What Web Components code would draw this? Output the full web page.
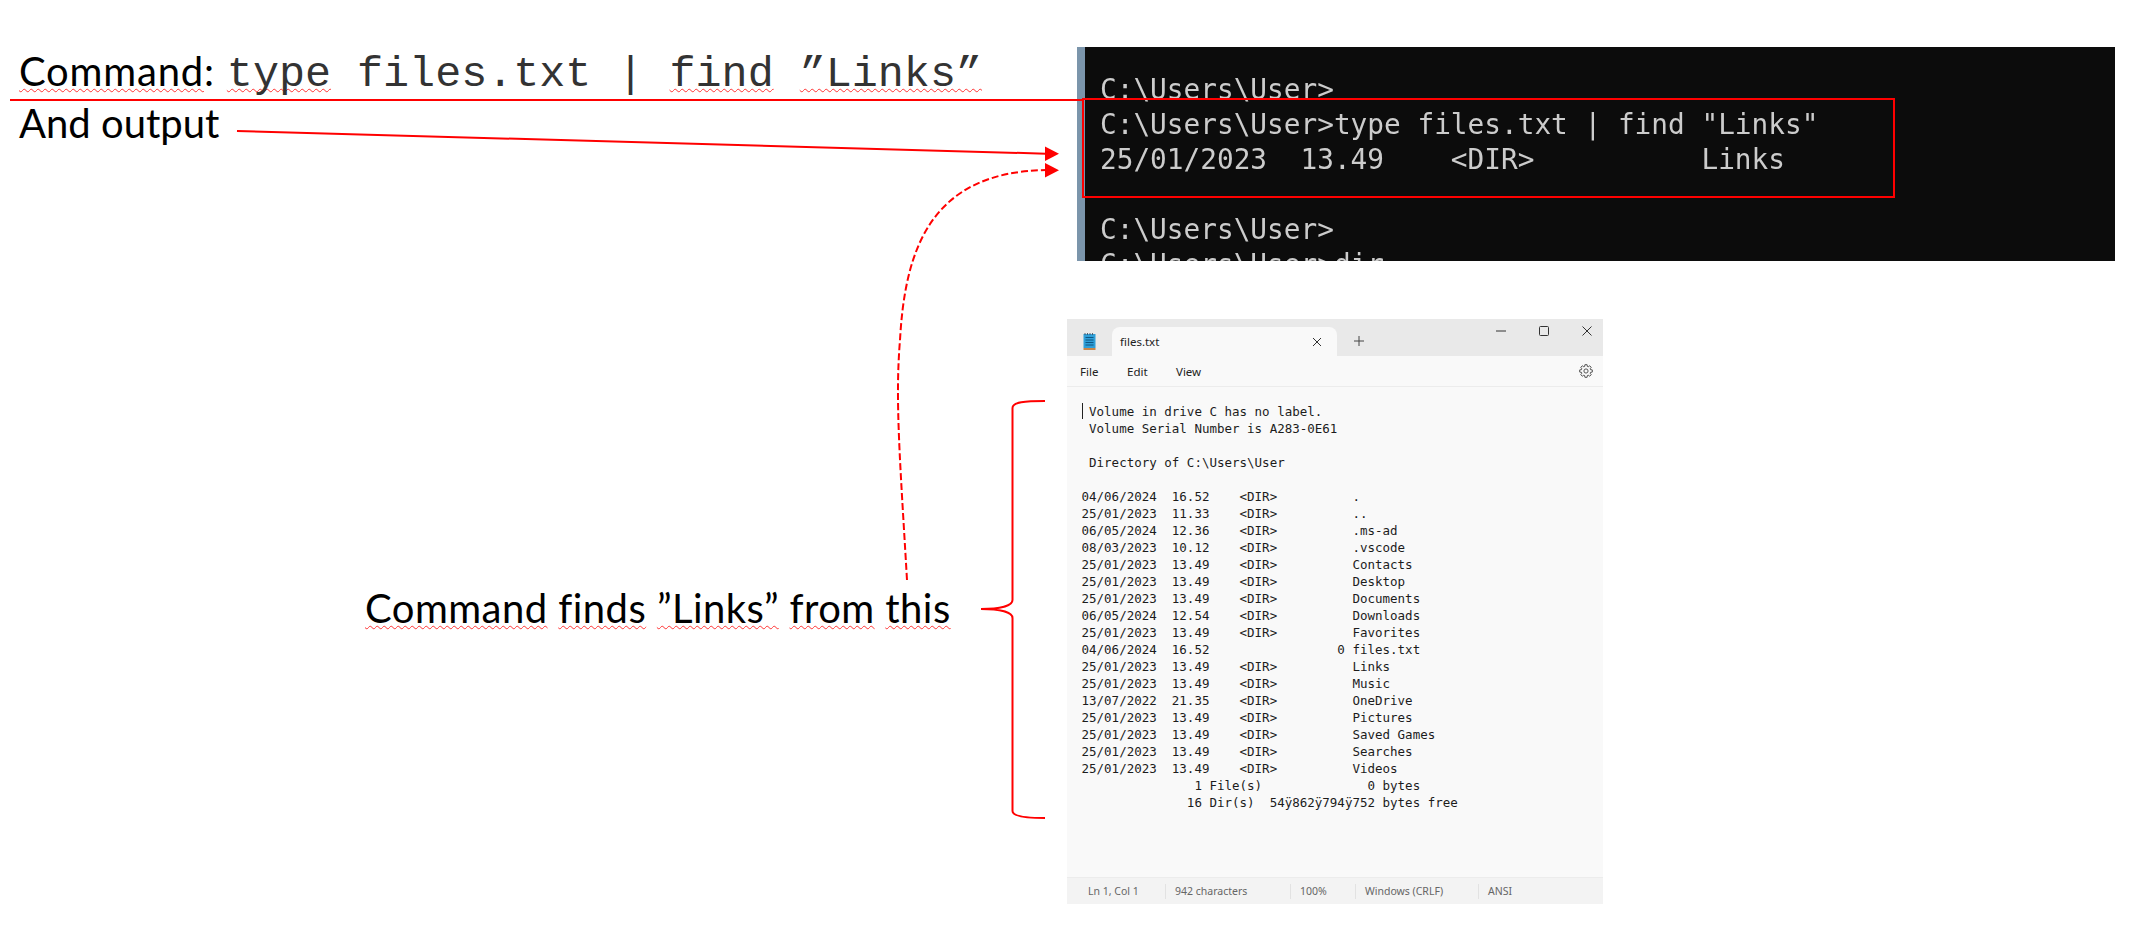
<!DOCTYPE html>
<html lang="en">
<head>
<meta charset="utf-8">
<title>files.txt</title>
<style>
    html, body { margin: 0; padding: 0; background: #fff; overflow: hidden; }
</style>
</head>
<body>
<slide-canvas>
    <slide-label style="--x: 19px; --y: 46px; --ls: 0.8px;"><spell-word>Command</spell-word>: <cmd-text><spell-word>type</spell-word> files.txt | <spell-word>find</spell-word> <spell-word>”Links”</spell-word></cmd-text></slide-label>
    <slide-label style="--x: 19px; --y: 98px;">And output</slide-label>
    <slide-label style="--x: 365px; --y: 583px; --ls: 0.45px;"><spell-word>Command</spell-word> <spell-word>finds</spell-word> <spell-word>”Links”</spell-word> <spell-word>from</spell-word> <spell-word>this</spell-word></slide-label>
    <terminal-shot></terminal-shot>
    <notepad-window></notepad-window>
    <annot-layer></annot-layer>
</slide-canvas>

<script>
class SlideCanvas extends HTMLElement {
    constructor() {
        super();
        this.attachShadow({ mode: 'open' });
        this.shadowRoot.innerHTML = `
            <style>
                :host {
                    display: block;
                    position: relative;
                    width: 2134px;
                    height: 937px;
                    background: #fff;
                    overflow: hidden;
                }
            </style>
            <slot></slot>
        `;
    }
}

class SlideLabel extends HTMLElement {
    constructor() {
        super();
        this.attachShadow({ mode: 'open' });
        this.shadowRoot.innerHTML = `
            <style>
                :host {
                    display: block;
                    position: absolute;
                    left: var(--x);
                    top: var(--y);
                    font: 40px/50px Lato, "Noto Sans", sans-serif;
                    letter-spacing: var(--ls, 0);
                    color: #000;
                    white-space: nowrap;
                }
            </style><slot></slot>`;
    }
}

// inline elements: no whitespace around the slot, it would show up as a gap
class SpellWord extends HTMLElement {
    constructor() {
        super();
        this.attachShadow({ mode: 'open' });
        this.shadowRoot.innerHTML = `<style>
                :host {
                    display: inline;
                    text-decoration: underline wavy #f33 1px;
                    text-underline-offset: 2px;
                    text-decoration-skip-ink: none;
                }
            </style><slot></slot>`;
    }
}

class CmdText extends HTMLElement {
    constructor() {
        super();
        this.attachShadow({ mode: 'open' });
        this.shadowRoot.innerHTML = `<style>
                :host {
                    display: inline;
                    margin-left: 1px;
                    font: 43.4px/50px "Liberation Mono", monospace;
                    letter-spacing: 0;
                    color: #333;
                }
            </style><slot></slot>`;
    }
}

class TerminalShot extends HTMLElement {
    constructor() {
        super();
        this.attachShadow({ mode: 'open' });
        this.shadowRoot.innerHTML = `
            <style>
                :host {
                    display: block;
                    position: absolute;
                    left: 1077px;
                    top: 47px;
                    width: 1038px;
                    height: 214px;
                    box-sizing: border-box;
                    background: #0c0c0c;
                    border-left: 8px solid #7b95ab;
                    overflow: hidden;
                }
                pre {
                    margin: 0;
                    padding: 25px 0 0 15px;
                    font: 27.75px/35px "DejaVu Sans Mono", monospace;
                    color: #ccc;
                    filter: blur(0.4px);
                }
            </style>
            <pre>C:\\Users\\User&gt;
C:\\Users\\User&gt;type files.txt | find "Links"
25/01/2023  13.49    &lt;DIR&gt;          Links

C:\\Users\\User&gt;
C:\\Users\\User&gt;dir</pre>
        `;
    }
}

// eight-tooth outline for the settings button
function gearPath(cx, cy, outer, inner) {
    let d = '';
    for (let i = 0; i < 8; i++) {
        const mid = i * Math.PI / 4;
        const pts = [[inner, mid - 0.3], [outer, mid - 0.17], [outer, mid + 0.17], [inner, mid + 0.3]];
        for (const [r, a] of pts) {
            d += (d ? 'L' : 'M') + (cx + r * Math.cos(a)).toFixed(2) + ' ' + (cy + r * Math.sin(a)).toFixed(2);
        }
    }
    return d + 'Z';
}

class NotepadWindow extends HTMLElement {
    constructor() {
        super();
        this.attachShadow({ mode: 'open' });
        this.shadowRoot.innerHTML = `
            <style>
                :host {
                    display: flex;
                    flex-direction: column;
                    position: absolute;
                    left: 1067px;
                    top: 319px;
                    width: 536px;
                    height: 585px;
                    background: #f9f9f9;
                    font: 11.5px "Noto Sans", "Open Sans", sans-serif;
                    color: #222;
                    overflow: hidden;
                }
                .tabs {
                    display: flex;
                    height: 37px;
                    flex: none;
                    background: #e9e9e9;
                }
                .app-icon {
                    width: 45px;
                    flex: none;
                    display: flex;
                    justify-content: center;
                    padding-top: 14px;
                    box-sizing: border-box;
                }
                .tab {
                    width: 225px;
                    flex: none;
                    margin-top: 8px;
                    background: #f9f9f9;
                    border-radius: 8px 8px 0 0;
                    display: flex;
                    align-items: center;
                    justify-content: space-between;
                    padding: 0 15px 0 8px;
                    box-sizing: border-box;
                }
                .plus {
                    width: 44px;
                    flex: none;
                    display: flex;
                    justify-content: center;
                    padding-top: 17px;
                    box-sizing: border-box;
                }
                .controls {
                    margin-left: auto;
                    display: flex;
                    gap: 31px;
                    padding: 6px 10px 0 0;
                }
                .menu {
                    display: flex;
                    align-items: center;
                    height: 30px;
                    flex: none;
                    padding: 0 10px 0 13px;
                    border-bottom: 1px solid #ececec;
                }
                .menu span { width: 47px; }
                .menu span:nth-child(2) { width: 49px; }
                .menu svg { margin-left: auto; }
                .text {
                    flex: 1;
                    position: relative;
                    min-height: 0;
                }
                pre {
                    margin: 0;
                    padding: 15.5px 0 0 14.5px;
                    font: 12.5px/17px "DejaVu Sans Mono", monospace;
                    color: #1c1c1c;
                }
                .caret {
                    position: absolute;
                    left: 15px;
                    top: 16px;
                    width: 1px;
                    height: 16px;
                    background: #222;
                }
                .status {
                    display: grid;
                    grid-template-columns: 98px 125px 65px 123px 1fr;
                    align-items: center;
                    height: 27px;
                    flex: none;
                    background: #f3f3f3;
                    border-top: 1px solid #ececec;
                    box-sizing: border-box;
                    font-size: 10.5px;
                    color: #666;
                }
                .status span {
                    height: 15px;
                    line-height: 15px;
                    padding-left: 9px;
                    border-left: 1px solid #e2e2e2;
                    white-space: pre;
                }
                .status span:first-child {
                    padding-left: 21px;
                    border-left: 0;
                }
            </style>
            <div class="tabs">
                <div class="app-icon">
                    <svg width="13" height="17" viewBox="0 0 13 17">
                        <rect x="0.5" y="1" width="12" height="14" fill="#2f9fd8"/>
                        <rect x="0.5" y="15" width="12" height="2" fill="#c9864a"/>
                        <path d="M2.5 4.5h8M2.5 7h8M2.5 9.5h8M2.5 12h8" stroke="#0b4f7a" stroke-width="0.9"/>
                        <path d="M2 0v2M4.5 0v2M7 0v2M9.5 0v2" stroke="#456" stroke-width="0.9"/>
                    </svg>
                </div>
                <div class="tab">
                    <span>files.txt</span>
                    <svg width="10" height="10" viewBox="0 0 10 10"><path d="M1 1l8 8M9 1l-8 8" stroke="#333" stroke-width="1" fill="none"/></svg>
                </div>
                <div class="plus">
                    <svg width="10" height="10" viewBox="0 0 10 10"><path d="M5 0v10M0 5h10" stroke="#444" stroke-width="1" fill="none"/></svg>
                </div>
                <div class="controls">
                    <svg width="12" height="12" viewBox="0 0 12 12"><path d="M1 6h10" stroke="#333" stroke-width="1"/></svg>
                    <svg width="12" height="12" viewBox="0 0 12 12"><rect x="1.5" y="1.5" width="9" height="9" rx="1" stroke="#333" stroke-width="1" fill="none"/></svg>
                    <svg width="12" height="12" viewBox="0 0 12 12"><path d="M1.5 1.5l9 9M10.5 1.5l-9 9" stroke="#333" stroke-width="1" fill="none"/></svg>
                </div>
            </div>
            <div class="menu">
                <span>File</span>
                <span>Edit</span>
                <span>View</span>
                <svg width="14" height="14" viewBox="0 0 14 14" fill="none" stroke="#444" stroke-width="0.9" stroke-linejoin="round">
                    <circle cx="7" cy="7" r="2.1"/>
                    <path d="${gearPath(7, 7, 6.4, 4.7)}"/>
                </svg>
            </div>
            <div class="text">
                <div class="caret"></div>
<pre> Volume in drive C has no label.
 Volume Serial Number is A283-0E61

 Directory of C:\\Users\\User

04/06/2024  16.52    &lt;DIR&gt;          .
25/01/2023  11.33    &lt;DIR&gt;          ..
06/05/2024  12.36    &lt;DIR&gt;          .ms-ad
08/03/2023  10.12    &lt;DIR&gt;          .vscode
25/01/2023  13.49    &lt;DIR&gt;          Contacts
25/01/2023  13.49    &lt;DIR&gt;          Desktop
25/01/2023  13.49    &lt;DIR&gt;          Documents
06/05/2024  12.54    &lt;DIR&gt;          Downloads
25/01/2023  13.49    &lt;DIR&gt;          Favorites
04/06/2024  16.52                 0 files.txt
25/01/2023  13.49    &lt;DIR&gt;          Links
25/01/2023  13.49    &lt;DIR&gt;          Music
13/07/2022  21.35    &lt;DIR&gt;          OneDrive
25/01/2023  13.49    &lt;DIR&gt;          Pictures
25/01/2023  13.49    &lt;DIR&gt;          Saved Games
25/01/2023  13.49    &lt;DIR&gt;          Searches
25/01/2023  13.49    &lt;DIR&gt;          Videos
               1 File(s)              0 bytes
              16 Dir(s)  54ÿ862ÿ794ÿ752 bytes free</pre>
            </div>
            <div class="status">
                <span>Ln 1, Col 1</span>
                <span>942 characters</span>
                <span>100%</span>
                <span>Windows (CRLF)</span>
                <span>ANSI</span>
            </div>
        `;
    }
}

// red lines, arrows and the brace on top of everything else
class AnnotLayer extends HTMLElement {
    constructor() {
        super();
        this.attachShadow({ mode: 'open' });
        this.shadowRoot.innerHTML = `
            <style>
                :host {
                    display: block;
                    position: absolute;
                    left: 0;
                    top: 0;
                    width: 2134px;
                    height: 937px;
                    pointer-events: none;
                }
            </style>
            <svg width="2134" height="937" viewBox="0 0 2134 937" fill="none" stroke="#f00" stroke-width="2">
                <path d="M10 100H1084"/>
                <rect x="1083" y="99" width="811" height="98"/>
                <path d="M237 131L1046 153.7"/>
                <path d="M1045 146.5L1059 153.7L1045 161Z" fill="#f00" stroke="none"/>
                <path d="M907 580C900 460 895 400 900 340C905 250 930 172 1046 170" stroke-dasharray="7 3"/>
                <path d="M1045 163L1059 170.3L1045 177.5Z" fill="#f00" stroke="none"/>
                <path d="M1045 401C1025 401 1012.5 402 1012.5 408V600C1012.5 606 1000 609 981 609C1000 609 1012.5 612 1012.5 618V811C1012.5 816 1025 818 1045 818"/>
            </svg>
        `;
    }
}

customElements.define('slide-canvas', SlideCanvas);
customElements.define('slide-label', SlideLabel);
customElements.define('spell-word', SpellWord);
customElements.define('cmd-text', CmdText);
customElements.define('terminal-shot', TerminalShot);
customElements.define('notepad-window', NotepadWindow);
customElements.define('annot-layer', AnnotLayer);
</script>
</body>
</html>
